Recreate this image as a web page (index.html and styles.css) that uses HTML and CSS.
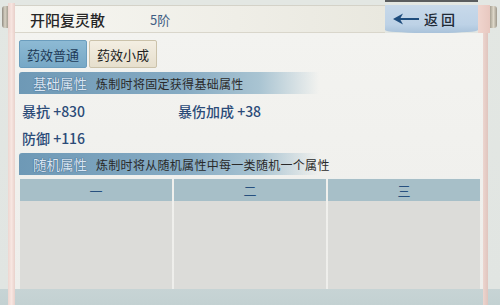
FILE: index.html
```html
<!DOCTYPE html>
<html lang="zh">
<head>
<meta charset="utf-8">
<link rel="stylesheet" href="styles.css">
</head>
<body>
<div class="screen">
  <div class="top">
    <div class="knob knob-left"></div>
    <div class="rod-top"></div>
    <div class="titlebar">
      <span class="title">开阳复灵散</span>
      <span class="grade">5阶</span>
    </div>
    <div class="back-wrap">
      <div class="back-cap"></div>
      <div class="back">
        <svg class="arrow" width="26" height="12" viewBox="0 0 26 12"><path d="M0 6 L10 0.5 L7.5 5 L26 5 L26 7 L7.5 7 L10 11.5 Z" fill="#1f4d7d"/></svg>
        <span class="back-text">返回</span>
      </div>
    </div>
    <div class="rod-top-right"></div>
    <div class="knob knob-right"></div>
  </div>
  <div class="body-row">
    <div class="rod-left"></div>
    <div class="panel">
      <div class="tabs">
        <div class="tab tab-active">药效普通</div>
        <div class="tab">药效小成</div>
      </div>
      <div class="section-head">
        <span class="section-name">基础属性</span>
        <span class="section-desc">炼制时将固定获得基础属性</span>
      </div>
      <div class="stats">
        <div class="stat-row">
          <span class="stat stat-a">暴抗 +830</span>
          <span class="stat">暴伤加成 +38</span>
        </div>
        <div class="stat-row">
          <span class="stat stat-a">防御 +116</span>
        </div>
      </div>
      <div class="section-head">
        <span class="section-name">随机属性</span>
        <span class="section-desc">炼制时将从随机属性中每一类随机一个属性</span>
      </div>
      <div class="table">
        <div class="col">
          <div class="col-head">一</div>
          <div class="col-body"></div>
        </div>
        <div class="col">
          <div class="col-head">二</div>
          <div class="col-body"></div>
        </div>
        <div class="col">
          <div class="col-head">三</div>
          <div class="col-body"></div>
        </div>
      </div>
    </div>
    <div class="rod-right"></div>
  </div>
</div>
</body>
</html>
```
FILE: styles.css
```css
* { box-sizing: border-box; }
html, body { margin: 0; padding: 0; }
body {
  width: 500px;
  height: 305px;
  overflow: hidden;
  font-family: "Noto Sans CJK SC", "Noto Sans", sans-serif;
  background: linear-gradient(to bottom, #e3e7e3 0, #e1e5e2 289px, #c7d4d5 289px, #c3d1d2 305px);
}
.screen { display: flex; flex-direction: column; height: 305px; }

/* top row */
.top { display: flex; height: 33px; flex: none; }
.knob {
  width: 6px;
  height: 22px;
  margin-top: 6px;
  background: linear-gradient(to right, #8f8a80, #d8d2c4 50%, #a59f92);
  border-radius: 3px 0 0 3px;
}
.knob-left { margin-left: 2px; }
.rod-top {
  width: 7px;
  margin-top: 3px;
  background: linear-gradient(to right, #ecd4ce, #f6e4df 50%, #e8cfc9);
}
.titlebar {
  width: 370px;
  margin-top: 5px;
  display: flex;
  align-items: center;
  padding-left: 15px;
  background: linear-gradient(to right, #f6f6f1, #efeee7 60%, #e9e8df);
  border-top: 1px solid #d4d2c8;
  border-bottom: 1px solid #d9d6cb;
}
.title { font-size: 15px; color: #262626; font-weight: 500; }
.grade { font-size: 13px; color: #3f5e84; margin-left: 45px; }
.back-wrap { width: 93px; display: flex; flex-direction: column; }
.back-cap { height: 2px; background: #5a5d5f; }
.back {
  margin-top: 3px;
  height: 28px;
  display: flex;
  align-items: center;
  padding-left: 8px;
  background: linear-gradient(to bottom, #c8d9ea, #bdd2e6 70%, #a9c2da);
  border-radius: 0 0 40% 40% / 0 0 3px 3px;
}
.arrow { display: block; }
.back-text {
  font-size: 14px;
  color: #202a36;
  margin-left: 5px;
  letter-spacing: 3px;
  font-weight: 500;
}
.rod-top-right {
  width: 12px;
  margin-top: 5px;
  background: linear-gradient(to right, #f0d5ce, #e8c8c0);
}
.knob-right {
  width: 7px;
  border-radius: 0 3px 3px 0;
  margin-top: 6px;
  background: linear-gradient(to right, #a7a192, #ddd7c8 50%, #9e988b);
}

/* body row */
.body-row { display: flex; flex: 1; padding-left: 8px; }
.rod-left {
  width: 7px;
  background: linear-gradient(to right, #edd6d0, #f7e6e1 50%, #e9d1cb);
}
.panel {
  width: 468px;
  height: 256px;
  padding: 7px 3px 0 4px;
  background: linear-gradient(to bottom, #f3f3f0, #eeeeeb);
  display: flex;
  flex-direction: column;
}
.rod-right {
  width: 5px;
  height: 272px;
  background: linear-gradient(to right, #ecd5cf, #e0c5be);
}

.tabs { display: flex; gap: 2px; height: 28px; flex: none; }
.tab {
  width: 68px;
  display: flex;
  align-items: center;
  justify-content: center;
  font-size: 13px;
  color: #222;
  background: linear-gradient(to bottom, #f3eee2, #e6dfcd);
  border: 1px solid #cbc2aa;
  border-radius: 2px;
}
.tab-active {
  color: #1e3b58;
  background: linear-gradient(to bottom, #8dbad4, #77a8c6);
  border-color: #6b9dbd;
}

.section-head {
  flex: none;
  margin-top: 4px;
  height: 22px;
  width: 300px;
  display: flex;
  align-items: center;
  padding-left: 14px;
  white-space: nowrap;
  background: linear-gradient(to right, #6e99b6 0, #86abc3 55%, #a9c4d2 80%, rgba(238,238,235,0) 100%);
  border-radius: 3px 0 0 0;
}
.section-name {
  font-size: 13.5px;
  color: #d9e6f4;
  text-shadow: 0 0 1px #3d5f80, 0 0 1px #3d5f80;
}
.section-desc {
  font-size: 12px;
  color: #2a2a2a;
  margin-left: 9px;
  letter-spacing: 0.3px;
}

.stats { padding-top: 3px; flex: none; }
.stat-row { height: 27px; display: flex; align-items: center; }
.stat { font-size: 14px; color: #2b4b78; font-weight: 500; }
.stat-a { width: 159px; padding-left: 3px; }
.stats + .section-head { margin-top: 2px; }

.table {
  margin-top: 3px;
  margin-left: 1px;
  width: 460px;
  flex: 1;
  display: flex;
  gap: 2px;
}
.col { flex: 1; display: flex; flex-direction: column; }
.col-head {
  height: 23px;
  border-top: 1px solid #eef0ee;
  background: #a7bfc8;
  display: flex;
  align-items: center;
  justify-content: center;
  font-size: 13px;
  color: #27507e;
}
.col-body { flex: 1; background: #dcdcd9; }
```
